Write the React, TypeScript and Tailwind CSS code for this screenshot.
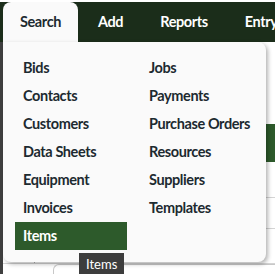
import React from 'react';

const tabs = ['Search', 'Add', 'Reports', 'Entry'];

const leftItems = ['Bids', 'Contacts', 'Customers', 'Data Sheets', 'Equipment', 'Invoices', 'Items'];
const rightItems = ['Jobs', 'Payments', 'Purchase Orders', 'Resources', 'Suppliers', 'Templates'];

const MenuLink = ({ label, active }: { label: string; active?: boolean }) => (
  <div
    className={
      active
        ? 'h-[28px] flex items-center px-2 bg-[#2d5a2b] text-white'
        : 'h-[28px] flex items-center px-2 text-[#1d2a30]'
    }
  >
    {label}
  </div>
);

const App = () => {
  return (
    <div
      className="relative w-[275px] h-[274px] overflow-hidden bg-white"
      style={{ fontFamily: 'Lato, "Open Sans", sans-serif' }}
    >
      {/* top nav */}
      <nav className="mt-[2px] h-[40px] bg-[#1b2d1a] flex items-stretch gap-[3px] pl-[3px] whitespace-nowrap">
        {tabs.map((t, i) => (
          <div
            key={t}
            className={
              i === 0
                ? 'px-[17px] flex items-center rounded-t-lg bg-[#fafafa] text-[#1d2a30] font-bold text-[14.5px] tracking-[-0.4px]'
                : 'px-[17px] flex items-center text-white font-bold text-[14.5px] tracking-[-0.4px]'
            }
          >
            {t}
          </div>
        ))}
      </nav>

      {/* page behind the menu */}
      <div className="flex h-[232px]">
        <div className="w-[3px] bg-[#3f3f3f]" />
        <div className="flex-1 flex flex-col">
          <div className="h-[84px]" />
          <div className="h-[39px] bg-[#2d5a2b]" />
          <div className="h-[37px] border-b border-[#d4d4d4]" />
          <div className="h-[32px] border-b border-[#d4d4d4]" />
          <div className="h-[36px] border-b border-[#d4d4d4] flex">
            <div className="w-[32px] border-r border-[#b5b5b5]" />
          </div>
          <div className="flex">
            <div className="w-[50px]" />
            <div className="flex-1 h-[10px] border-t border-l border-[#c8c8c8] rounded-tl-md" />
          </div>
        </div>
      </div>

      {/* dropdown */}
      <div className="absolute left-[3px] top-[42px] w-[263px] bg-[#fafafa] rounded-b-lg rounded-tr-lg shadow-[2px_2px_4px_rgba(0,0,0,0.3)] px-[12px] py-[12px]">
        <div className="grid grid-cols-[112px_112px] gap-x-[14px] font-bold text-[14.5px] tracking-[-0.4px]">
          <div className="flex flex-col">
            {leftItems.map((l) => (
              <MenuLink key={l} label={l} active={l === 'Items'} />
            ))}
          </div>
          <div className="flex flex-col whitespace-nowrap">
            {rightItems.map((l) => (
              <MenuLink key={l} label={l} />
            ))}
          </div>
        </div>
      </div>

      {/* tooltip */}
      <div className="absolute left-[79px] top-[253px] h-[24px] px-[7px] bg-[#3d3d3d] text-white text-[13px] flex items-center">
        Items
      </div>
    </div>
  );
};

export default App;
